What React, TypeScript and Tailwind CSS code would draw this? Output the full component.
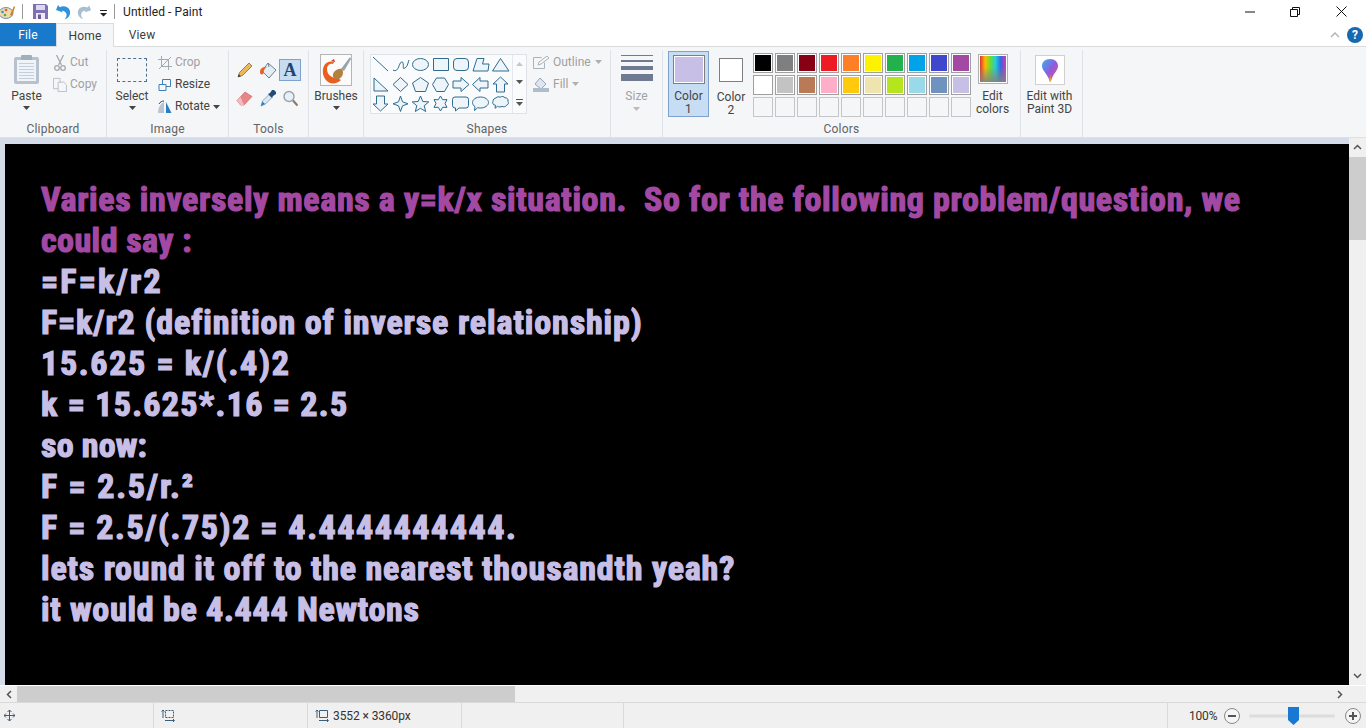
import React from "react";

const L = ({ children, className = "" }: { children: React.ReactNode; className?: string }) => (
  <span className={"text-[12px] leading-[13px] text-center " + className}>{children}</span>
);

const Caret = ({ className = "" }: { className?: string }) => (
  <svg width="7" height="4" viewBox="0 0 7 4" className={className}>
    <path d="M0 0h7L3.5 4z" fill="currentColor" />
  </svg>
);

const Group = ({ w, label, children }: { w: number | string; label?: string; children: React.ReactNode }) => (
  <div style={{ width: w }} className="flex flex-col shrink-0 h-[87px] mt-[2px] border-r border-[#dfe2e6]">
    <div className="flex-1 min-h-0 flex">{children}</div>
    {label ? <div className="h-[17px] pt-[2px] text-center text-[12px] leading-[15px] text-[#5f6368] tracking-[0.2px]">{label}</div> : <div className="h-[17px]" />}
  </div>
);

const shapes: React.ReactNode[] = [
  <path d="M2 1L17 15" />,
  <path d="M2 14c3 2 5-1 6-4s3-6 4-3-1 7 2 5 3-6 4-8" fill="none" />,
  <ellipse cx="9.5" cy="8.5" rx="8" ry="6" />,
  <rect x="2.5" y="2.5" width="15" height="12" />,
  <rect x="2.5" y="2.5" width="15" height="12" rx="3.5" />,
  <path d="M2 15L6 2.5h7L11.5 8H18l-1 7z" />,
  <path d="M9.5 2.5L18 15H1.5z" />,
  <path d="M3 2v13h14z" />,
  <path d="M9.5 1.5L17 8.5l-7.5 7-7.500-7z" />,
  <path d="M9.500 1.500L17.500 7l-3 8.500h-10L1.500 7z" />,
  <path d="M5.500 2h8l4 6.500-4 7h-8L1.500 8.500z" />,
  <path d="M2 5h8V1.500L18 8.500l-8 7V12H2z" />,
  <path d="M17 5H9V1.500L1.500 8.500l7.500 7V12H17z" />,
  <path d="M5.500 16V8H2l7.500-7L17 8h-3.500v8z" />,
  <path d="M5.500 1h8v8H17l-7.500 7L2 9h3.500z" />,
  <path d="M9.500 1l2 5.800 5.500 2-5.500 2-2 5.700-2-5.700-5.500-2 5.500-2z" />,
  <path d="M9.500 1l2.300 5.500 6 .4-4.600 3.800 1.500 5.800-5.200-3.200-5.200 3.200 1.500-5.800L1.200 6.900l6-.4z" />,
  <path d="M9.500 1l2.200 3.700 4.300-.1-2 3.900 2 3.900-4.300-.1-2.200 3.700-2.200-3.700-4.300.1 2-3.900-2-3.900 4.300.1z" />,
  <path d="M4 2h11a2.500 2.500 0 0 1 2.500 2.500v6A2.500 2.500 0 0 1 15 13H8l-3.500 3v-3H4a2.500 2.500 0 0 1-2.500-2.500v-6A2.500 2.500 0 0 1 4 2z" />,
  <path d="M9.500 2c4.500 0 8 2.500 8 5.500S14 13 9.500 13c-1 0-2 0-2.800-.3L3.500 15.500l.5-3.800C2.500 10.700 1.500 9.200 1.500 7.500 1.500 4.500 5 2 9.500 2z" />,
  <path d="M5 3c1-1.500 3-1.500 4 -.7 1.500-1.300 4-1 5 .5 2-.2 3.500 1.500 3 3.500 1 1.500 .3 3.500-1.500 4-.7 1.500-3 2-4.500 1-1 .8-3 1-4.500 0l-2.500 2 .5-3C2 10 1 8 2 6.500 1.800 4.500 3.500 3 5 3z" />,
];

const row1 = ["#000000", "#7f7f7f", "#880015", "#ed1c24", "#ff7f27", "#fff200", "#22b14c", "#00a2e8", "#3f48cc", "#a349a4"];
const row2 = ["#ffffff", "#c3c3c3", "#b97a57", "#ffaec9", "#ffc90e", "#efe4b0", "#b5e61d", "#99d9ea", "#7092be", "#c8bfe7"];
const empty = Array.from({ length: 10 }, () => "");

const Swatch = ({ c }: { c: string }) => (
  <div className={"w-[20px] h-[20px] border " + (c ? "border-[#a0a0a0] p-[1px] bg-white" : "border-[#c4c6c9] bg-[#f5f6f7]")}>
    {c ? <div className="w-full h-full" style={{ background: c }} /> : null}
  </div>
);

const lines = [
  { t: "Varies inversely means a y=k/x situation.  So for the following problem/question, we", c: "text-[#a349a4] tracking-[0.65px]" },
  { t: "could say :", c: "text-[#a349a4] tracking-[0.45px]" },
  { t: "=F=k/r2", c: "tracking-[2.2px]" },
  { t: "F=k/r2 (definition of inverse relationship)", c: "tracking-[0.9px]" },
  { t: "15.625 = k/(.4)2", c: "tracking-[1.7px]" },
  { t: "k = 15.625*.16 = 2.5", c: "tracking-[1.3px]" },
  { t: "so now:", c: "tracking-[0.2px]" },
  { t: "F = 2.5/r.²", c: "tracking-[1.8px]" },
  { t: "F = 2.5/(.75)2 = 4.4444444444.", c: "tracking-[1.57px]" },
  { t: "lets round it off to the nearest thousandth yeah?", c: "tracking-[0.82px]" },
  { t: "it would be 4.444 Newtons", c: "tracking-[0.74px]" },
];

export default function App() {
  return (
    <div className="w-[1366px] h-[728px] overflow-hidden flex flex-col bg-[#d3dce8] font-['Roboto','Noto_Sans',sans-serif] text-[#3c3c3c]">
      {/* Title bar */}
      <div className="h-[23px] bg-white flex items-center shrink-0">
        <svg width="16" height="16" viewBox="0 0 16 16" className="ml-[-1px]">
          <ellipse cx="7" cy="9" rx="7" ry="5.500" fill="#f0d9a8" stroke="#6d93b8" />
          <circle cx="3.500" cy="8" r="1.300" fill="#3d8fd1" />
          <circle cx="7" cy="6" r="1.300" fill="#e45b3c" />
          <circle cx="6" cy="11" r="1.300" fill="#58a83e" />
          <path d="M11 11L15 2l1 1-3 9z" fill="#c9802f" />
        </svg>
        <div className="w-px h-[15px] bg-[#9a9a9a] ml-[7px]" />
        <svg width="15" height="15" viewBox="0 0 15 15" className="ml-[10px]">
          <path d="M0 0h13l2 2v13H0z" fill="#7f6fb3" />
          <rect x="3" y="1" width="9" height="5" fill="#dcd8ee" />
          <rect x="3" y="9" width="9" height="6" fill="#ece9f6" />
          <rect x="5" y="10.500" width="3" height="4.500" fill="#6a5a9e" />
        </svg>
        <svg width="16" height="16" viewBox="0 0 16 16" className="ml-[7px]">
          <path d="M1 6l2-5 1.800 2.200C7 2 10 2 12.500 3.500 15.500 5.500 16 10 13.500 13c-1 1.200-2.500 2-4 2.500 1.300-1.500 2.500-3.500 2-5.500C11 7.800 8.500 6.500 6.800 6.800L8 8.500z" fill="#2f93dc" />
        </svg>
        <svg width="15" height="16" viewBox="0 0 16 16" className="ml-[6px]">
          <path d="M15 6l-2-5-1.800 2.200C9 2 6 2 3.500 3.500 .5 5.500 0 10 2.500 13c1 1.200 2.500 2 4 2.500-1.300-1.500-2.500-3.500-2-5.500C5 7.800 7.500 6.500 9.200 6.800L8 8.500z" fill="#a9bfd0" />
        </svg>
        <svg width="8" height="8" viewBox="0 0 8 8" className="ml-[8px] mt-[3px] text-[#222]">
          <path d="M0 1h7v1H0zM0 4h7L3.500 7.500z" fill="currentColor" />
        </svg>
        <div className="w-px h-[15px] bg-[#9a9a9a] ml-[6px]" />
        <span className="ml-[8px] text-[12px] text-[#222] tracking-[0.1px]">Untitled - Paint</span>
        <div className="ml-auto flex items-center h-full pr-[2px]">
          <div className="w-[46px] flex justify-center pl-[1px]">
            <svg width="10" height="10" viewBox="0 0 10 10"><path d="M0 5h10" stroke="#111" /></svg>
          </div>
          <div className="w-[46px] flex justify-center">
            <svg width="10" height="10" viewBox="0 0 10 10" fill="none" stroke="#111"><path d="M.5 2.500h7v7h-7zM2.500 2.500v-2h7v7h-2" /></svg>
          </div>
          <div className="w-[46px] flex justify-center">
            <svg width="11" height="11" viewBox="0 0 11 11" stroke="#111"><path d="M.5.500l10 10M10.500.500l-10 10" /></svg>
          </div>
        </div>
      </div>

      {/* Tabs */}
      <div className="h-[24px] bg-white flex items-stretch shrink-0 border-b border-[#dadbdc] text-[12px] relative">
        <div className="w-[56px] h-[23px] bg-[#1979ca] text-white flex items-center justify-center tracking-[0.2px]">File</div>
        <div className="w-[58px] h-[24px] z-10 bg-[#f5f6f7] border-x border-t border-[#dadbdc] flex items-center justify-center text-[#3c3c3c] tracking-[0.2px]">Home</div>
        <div className="w-[56px] flex items-center justify-center text-[#3c3c3c] tracking-[0.2px]">View</div>
        <div className="ml-auto flex items-center pr-[3px] gap-[7px]">
          <svg width="10" height="6" viewBox="0 0 10 6" fill="none" stroke="#b0b0b0" strokeWidth="1.300"><path d="M1 5l4-4 4 4" /></svg>
          <div className="w-[16px] h-[16px] rounded-full bg-[#1668b0] text-white text-[12px] font-bold flex items-center justify-center leading-none">?</div>
        </div>
      </div>

      {/* Ribbon */}
      <div className="h-[91px] bg-[#f5f6f7] flex shrink-0 pt-[1px] border-b border-[#dde1e6]">
        <Group w={107} label="Clipboard">
          <div className="w-[53px] flex flex-col items-center pt-[5px]">
            <svg width="25" height="29" viewBox="0 0 25 29">
              <rect x="0" y="2" width="25" height="27" rx="2" fill="#b7c2cf" />
              <rect x="3" y="5" width="19" height="21" fill="#f0f3f8" />
              <path d="M5 8.500h15M5 11.500h15M5 14.500h15M5 17.500h15M5 20.500h15M5 23.500h15" stroke="#c3cfdd" />
              <rect x="7" y="0" width="11" height="5" rx="1" fill="#a3aebb" />
            </svg>
            <L className="mt-[6px] text-[#444]">Paste</L>
            <Caret className="mt-[3px] text-[#444]" />
          </div>
          <div className="flex flex-col gap-[7px] pt-[5px] text-[#a0a0a0]">
            <div className="flex items-center gap-[3px] h-[15px]">
              <svg width="14" height="16" viewBox="0 0 14 16" fill="none" stroke="#a3a9b0" strokeWidth="1.300"><path d="M3.500 0l5 10M10.500 0l-5 10" /><circle cx="4" cy="13" r="2.300" /><circle cx="10" cy="13" r="2.300" /></svg>
              <L>Cut</L>
            </div>
            <div className="flex items-center gap-[3px] h-[15px]">
              <svg width="14" height="15" viewBox="0 0 15 16" fill="#f5f6f7" stroke="#b8bec5"><path d="M.5 1.500h7v11h-7z" /><path d="M5.500 5.500h6l3 3v7h-9z" /></svg>
              <L>Copy</L>
            </div>
          </div>
        </Group>

        <Group w={122} label="Image">
          <div className="w-[50px] flex flex-col items-center pt-[8px]">
            <div className="w-[30px] h-[24px] border border-dashed border-[#4d6f8f]" />
            <L className="mt-[8px] text-[#444]">Select</L>
            <Caret className="mt-[3px] text-[#444]" />
          </div>
          <div className="flex flex-col gap-[7px] pt-[5px] ml-[1px]">
            <div className="flex items-center gap-[3px] h-[15px] text-[#a0a0a0]">
              <svg width="14" height="14" viewBox="0 0 14 14" fill="none" stroke="#a3a9b0"><path d="M3.500 0v10.500H14M0 3.500h10.500V14M1 13L13 1" /></svg>
              <L>Crop</L>
            </div>
            <div className="flex items-center gap-[3px] h-[15px] text-[#444]">
              <svg width="14" height="14" viewBox="0 0 14 14" fill="#f5f6f7" stroke="#3f7fb5"><path d="M4.500 1.500h8v7h-8z" /><path d="M1 6.500h7v6H1z" /></svg>
              <L>Resize</L>
            </div>
            <div className="flex items-center gap-[3px] h-[15px] text-[#444]">
              <svg width="14" height="14" viewBox="0 0 14 14"><path d="M6 13H0C0 8 2 4 6 2z" fill="#b9c5d2" /><path d="M8 2l5.500 11H8z" fill="#2b7cc1" /><path d="M1 4c1-2 3-3 5-3" fill="none" stroke="#444" /></svg>
              <L>Rotate</L>
              <Caret className="text-[#444]" />
            </div>
          </div>
        </Group>

        <Group w={80} label="Tools">
          <div className="grid grid-cols-[23px_23px_23px] grid-rows-[22px_22px] gap-y-[6px] ml-[4px] mt-[9px] h-[50px]">
            <div className="flex items-center justify-center">
              <svg width="16" height="16" viewBox="0 0 16 16"><path d="M1 15l1.500-4.500L12 1l3 3-9.500 9.500z" fill="#eeb65c" stroke="#7d6a4c" strokeWidth=".8" /><path d="M1 15l.8-2.800 2 2z" fill="#333" /></svg>
            </div>
            <div className="flex items-center justify-center">
              <svg width="18" height="17" viewBox="0 0 18 17"><path d="M9 1l8 7-7 8-7-7z" fill="#e3edf6" stroke="#6f8192" /><path d="M9 1l1 4" stroke="#6f8192" /><path d="M1 10c0-4 3-5.500 7-5-3 1.500-3 4-3.500 6.500C3.500 13 1 13 1 10z" fill="#e8622c" /></svg>
            </div>
            <div className="w-[22px] h-[22px] bg-[#c6dcf3] border border-[#7da2ce] flex items-center justify-center">
              <span className="font-['Liberation_Serif',serif] font-bold text-[18px] leading-none text-[#23446e]">A</span>
            </div>
            <div className="flex items-center justify-center">
              <svg width="17" height="15" viewBox="0 0 17 15"><path d="M1 9.500l8-8.500 7 4.500-8 8.500H4.500z" fill="#e98585" stroke="#c46c6e" strokeWidth=".7" /><path d="M1 9.500l3.500 4.500H8L4.500 6z" fill="#f3bcbc" /></svg>
            </div>
            <div className="flex items-center justify-center">
              <svg width="16" height="17" viewBox="0 0 16 17"><path d="M1 16l1.500-5L9 4.500l3 3L5.500 14z" fill="#dbe7f2" stroke="#6d8aa6" strokeWidth=".7" /><path d="M1 16l1.500-4.500 2.500 2.500z" fill="#2b7cc1" /><path d="M8 4l2-1 2-3h2l2 2v2l-3 2-1 2z" fill="#224a75" /></svg>
            </div>
            <div className="flex items-center justify-center">
              <svg width="15" height="17" viewBox="0 0 15 17" fill="none"><circle cx="6" cy="6.500" r="5" fill="#e8eff6" stroke="#9aa2aa" strokeWidth="1.400" /><path d="M10 10.500l4.500 5" stroke="#8d7c67" strokeWidth="2.200" /></svg>
            </div>
          </div>
        </Group>

        <Group w={55} label="">
          <div className="w-full flex flex-col items-center pt-[4px]">
            <svg width="32" height="32" viewBox="0 0 32 32">
              <rect x=".5" y=".5" width="31" height="31" fill="#fbfbfb" stroke="#b5b5b5" />
              <path d="M3 15C4 9 9 6 14 8l-1 2c-3-1-6 1-6 5 0 6 5 9 10 9l4 2c-3 3-7 4-11 3-5-2-8-8-7-14z" fill="#e8601f" />
              <path d="M11 7l3-2 1 3z" fill="#c33" />
              <path d="M13 23c-1-5 4-9 9-8 2 3 1 8-3 10-2 1-4 0-6-2z" fill="#b3813f" />
              <path d="M21 15L30 3l1 2-7 12z" fill="#98a2ad" />
            </svg>
            <L className="mt-[4px] text-[#444]">Brushes</L>
            <Caret className="mt-[3px] text-[#444]" />
          </div>
        </Group>

        <Group w={247} label="Shapes">
          <div className="ml-[6px] mt-[4px] w-[157px] h-[60px] bg-[#fafbfc] border border-[#dfe3e8] flex">
            <div className="grid grid-cols-[repeat(7,20px)] auto-rows-[19.500px] w-[141px] pl-[0px] ml-[-1px]">
              {shapes.map((s, i) => (
                <div key={i} className="flex items-center justify-center">
                  <svg width="19" height="17" viewBox="0 0 19 17" fill="#edf4fa" stroke="#2f6c8f" strokeWidth="1" strokeLinejoin="round">{s}</svg>
                </div>
              ))}
            </div>
            <div className="flex-1 ml-[1px] flex flex-col border-l border-[#e4e7eb] text-[#555] items-center justify-around">
              <Caret className="rotate-180 text-[#c4c8cc]" />
              <Caret />
              <svg width="7" height="7" viewBox="0 0 7 7"><path d="M0 0h7v1H0zM0 3h7L3.500 7z" fill="currentColor" /></svg>
            </div>
          </div>
          <div className="flex flex-col gap-[6px] pt-[4px] ml-[6px] text-[#a0a0a0]">
            <div className="flex items-center gap-[3px] h-[16px]">
              <svg width="17" height="14" viewBox="0 0 17 14" fill="none" stroke="#aab2ba"><path d="M.5 2.500h8M.5 2.500v11h11v-6M5 10l1-3 8-6 2 2-8 6z" /></svg>
              <L>Outline</L>
              <Caret className="ml-[1px] text-[#b0b0b0]" />
            </div>
            <div className="flex items-center gap-[3px] h-[16px]">
              <svg width="17" height="15" viewBox="0 0 17 15"><path d="M7 1l6 6-5 5-6-5z" fill="#dfe6ee" stroke="#93a6b9" /><rect x="0" y="11" width="16" height="4" fill="#aebdcc" /></svg>
              <L>Fill</L>
              <Caret className="ml-[1px] text-[#b0b0b0]" />
            </div>
          </div>
        </Group>

        <Group w={52} label="">
          <div className="w-full flex flex-col items-center pt-[5px] text-[#9da3a9]">
            <div className="w-[32px] flex flex-col gap-[4px]">
              <div className="h-px bg-[#6d7a92]" />
              <div className="h-[2px] bg-[#6d7a92]" />
              <div className="h-[4px] bg-[#6d7a92]" />
              <div className="h-[7px] bg-[#6d7a92]" />
            </div>
            <L className="mt-[9px]">Size</L>
            <Caret className="mt-[4px] text-[#bbb]" />
          </div>
        </Group>

        <Group w={358} label="Colors">
          <div className="w-[41px] h-[66px] ml-[5px] mt-[1px] bg-[#c6ddf4] border border-[#7da2ce] flex flex-col items-center pt-[3px]">
            <div className="w-[32px] h-[32px] border border-[#7f7f7f] p-px bg-white"><div className="w-full h-full bg-[#c8bfe7]" /></div>
            <L className="mt-[6px] text-[#444] leading-[13px]">Color<br />1</L>
          </div>
          <div className="w-[44px] h-[66px] mt-[1px] flex flex-col items-center pt-[7px]">
            <div className="w-[24px] h-[24px] border border-[#7f7f7f] bg-white" />
            <L className="mt-[9px] text-[#444]">Color<br />2</L>
          </div>
          <div className="flex flex-col gap-[2px] mt-[3px]">
            {[row1, row2, empty].map((r, i) => (
              <div key={i} className="flex gap-[2px]">
                {r.map((c, j) => <Swatch key={j} c={c} />)}
              </div>
            ))}
          </div>
          <div className="w-[43px] flex flex-col items-center pt-[4px]">
            <div className="w-[30px] h-[30px] border border-[#b0b0b0] p-px bg-white">
              <div className="w-full h-full bg-[linear-gradient(to_bottom,rgba(0,0,0,0)_40%,rgba(130,130,130,0.9)),linear-gradient(to_right,#d33,#fb0,#6d3,#2cd,#36d,#d3b)]" />
            </div>
            <L className="mt-[6px] text-[#444]">Edit<br />colors</L>
          </div>
        </Group>

        <Group w={62} label="">
          <div className="w-full flex flex-col items-center pt-[5px] pr-[4px]">
            <div className="w-[30px] h-[30px] border border-[#d0d0d0] bg-white flex items-center justify-center">
              <svg width="18" height="24" viewBox="0 0 18 24">
                <defs>
                  <linearGradient id="p3d" x1="0" y1="0" x2="1" y2="1">
                    <stop offset="0" stopColor="#33b6e8" />
                    <stop offset=".5" stopColor="#8e5be0" />
                    <stop offset="1" stopColor="#f0506e" />
                  </linearGradient>
                </defs>
                <path d="M9 1c5 0 8 3 8 7 0 5-5 7-7 15-.5 1-1 1-1.500 0C7 16 1 13 1 8c0-4 3-7 8-7z" fill="url(#p3d)" />
                <path d="M9 16l1 7c-.5 1-1 1-1.500 0z" fill="#f7b32b" />
              </svg>
            </div>
            <L className="mt-[5px] text-[#444] whitespace-nowrap">Edit with<br />Paint 3D</L>
          </div>
        </Group>
      </div>

      {/* Work area */}
      <div className="flex-1 min-h-0 flex flex-col">
        <div className="flex-1 min-h-0 flex">
          <div className="flex-1 min-w-0 pl-[5px] pt-[6px] bg-[#d3dce8]">
            <div className="h-full bg-black overflow-hidden pl-[36px] pt-[35px]">
              <div className="font-['Liberation_Sans_Narrow','Roboto_Condensed','Roboto',sans-serif] font-bold text-[34px] leading-[41.050px] text-[#c8bfe7] [-webkit-text-stroke:1.2px_currentColor] whitespace-pre">
                {lines.map((l, i) => (
                  <div key={i} className={l.c}>{l.t}</div>
                ))}
              </div>
            </div>
          </div>
          <div className="w-[17px] bg-[#f0f0f0] flex flex-col items-center">
            <svg width="9" height="6" viewBox="0 0 9 6" fill="none" stroke="#555" strokeWidth="1.500" className="mt-[6px]"><path d="M1 5l3.500-3.500L8 5" /></svg>
            <div className="w-full h-[83px] bg-[#cdcdcd] mt-[7px]" />
            <svg width="9" height="6" viewBox="0 0 9 6" fill="none" stroke="#555" strokeWidth="1.500" className="mt-auto mb-[6px]"><path d="M1 1l3.500 3.500L8 1" /></svg>
          </div>
        </div>
        <div className="h-[17px] bg-[#f0f0f0] flex items-center shrink-0 border-t border-white">
          <svg width="6" height="9" viewBox="0 0 6 9" fill="none" stroke="#555" strokeWidth="1.500" className="ml-[6px]"><path d="M5 1L1.500 4.500 5 8" /></svg>
          <div className="w-[498px] h-full bg-[#cdcdcd] ml-[5px]" />
          <svg width="6" height="9" viewBox="0 0 6 9" fill="none" stroke="#555" strokeWidth="1.500" className="ml-auto mr-[23px]"><path d="M1 1l3.500 3.500L1 8" /></svg>
        </div>
      </div>

      {/* Status bar */}
      <div className="h-[26px] bg-[#f0f0f0] border-t border-[#d9d9d9] flex items-stretch shrink-0 text-[12px] text-[#333]">
        <div className="w-[154px] border-r border-[#d9d9d9] flex items-center pl-[4px]">
          <svg width="11" height="11" viewBox="0 0 11 11" stroke="#3a5f7d" fill="none"><path d="M5.500 0v11M0 5.500h11M3.500 2l2-2 2 2M3.500 9l2 2 2-2M2 3.500l-2 2 2 2M9 3.500l2 2-2 2" /></svg>
        </div>
        <div className="w-[154px] border-r border-[#d9d9d9] flex items-center pl-[7px]">
          <svg width="14" height="13" viewBox="0 0 14 13" stroke="#3a5f7d" fill="none"><path d="M2 1v8M.5 2.500L2 1l1.500 1.500" /><path d="M4.500 1.500h8v7h-8z" strokeDasharray="2 1" /><path d="M4 11.500h9M12 10l1.500 1.500L12 13" /></svg>
        </div>
        <div className="w-[154px] border-r border-[#d9d9d9] flex items-center pl-[7px] gap-[4px]">
          <svg width="14" height="13" viewBox="0 0 14 13" stroke="#3a5f7d" fill="none"><path d="M2 1v8M.5 2.500L2 1l1.500 1.500" /><path d="M4.500 1.500h8v7h-8z" /><path d="M4 11.500h9M12 10l1.500 1.500L12 13" /></svg>
          <span className="whitespace-nowrap tracking-[-0.1px]">3552 × 3360px</span>
        </div>
        <div className="w-[162px] border-r border-[#d9d9d9]" />
        <div className="w-[544px] border-r border-[#d9d9d9]" />
        <div className="flex-1 flex items-center pl-[21px]">
          <span className="tracking-[-0.2px]">100%</span>
          <div className="ml-[7px] w-[16px] h-[16px] rounded-full border border-[#8a8a8a] bg-[#f5f5f5] flex items-center justify-center">
            <div className="w-[8px] h-[2px] bg-[#555]" />
          </div>
          <div className="relative ml-[9px] w-[86px] h-[4px] bg-[#dcdcdc] border border-[#e6e6e6]">
            <svg width="11" height="18" viewBox="0 0 11 18" className="absolute left-[38px] top-[-8px]">
              <path d="M0 0h11v13l-5.500 5L0 13z" fill="#1979d2" />
            </svg>
          </div>
          <div className="ml-[10px] w-[16px] h-[16px] rounded-full border border-[#8a8a8a] bg-[#f5f5f5] relative flex items-center justify-center">
            <div className="w-[8px] h-[2px] bg-[#555]" />
            <div className="absolute w-[2px] h-[8px] bg-[#555]" />
          </div>
        </div>
      </div>
    </div>
  );
}
